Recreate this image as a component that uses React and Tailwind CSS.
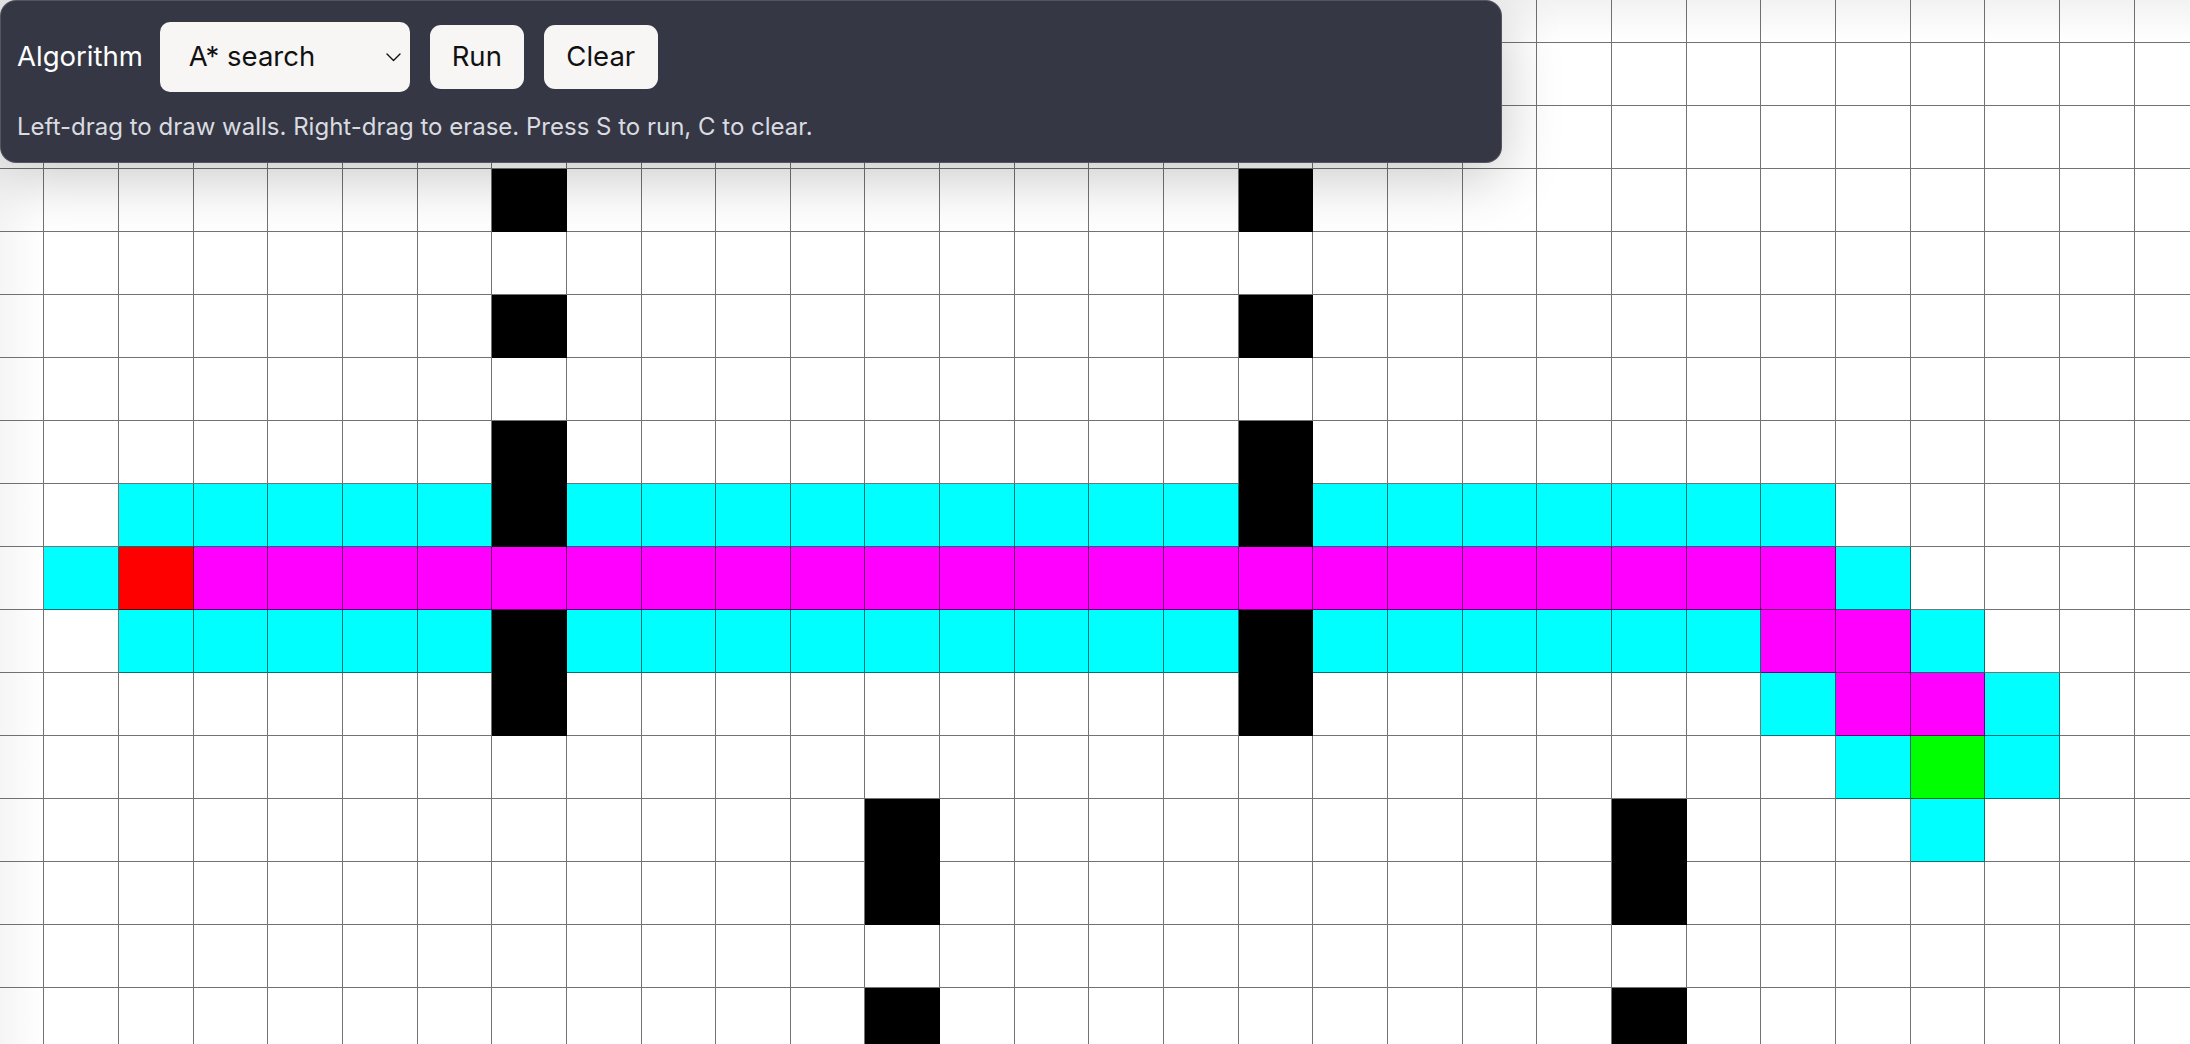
import React, { useState } from 'react';

const COLS = 30;
const ROWS = 17;

// cell kinds on the board
const WALL = 'wall';
const OPEN = 'open';
const PATH = 'path';
const START = 'start';
const GOAL = 'goal';

const cellClass = {
    empty: 'bg-white',
    [WALL]: 'bg-black',
    [OPEN]: 'bg-[#00ffff]',
    [PATH]: 'bg-[#ff00ff]',
    [START]: 'bg-[#ff0000]',
    [GOAL]: 'bg-[#00ff00]',
};

function buildBoard() {
    const board = Array.from({ length: ROWS }, () => Array(COLS).fill('empty'));
    const set = (r, c, kind) => { board[r][c] = kind; };
    const span = (r, from, to, kind) => { for (let c = from; c <= to; c++) set(r, c, kind); };

    // two upper walls with gaps
    [7, 17].forEach((c) => [3, 5, 7, 8, 10, 11].forEach((r) => set(r, c, WALL)));
    // two lower walls
    [12, 22].forEach((c) => [13, 14, 16].forEach((r) => set(r, c, WALL)));

    // explored cells
    span(8, 2, 6, OPEN); span(8, 8, 16, OPEN); span(8, 18, 24, OPEN);
    span(10, 2, 6, OPEN); span(10, 8, 16, OPEN); span(10, 18, 23, OPEN);
    set(9, 1, OPEN); set(9, 25, OPEN);
    set(10, 26, OPEN);
    set(11, 24, OPEN); set(11, 27, OPEN);
    set(12, 25, OPEN); set(12, 27, OPEN);
    set(13, 26, OPEN);

    // final route
    span(9, 3, 24, PATH);
    set(10, 24, PATH); set(10, 25, PATH);
    set(11, 25, PATH); set(11, 26, PATH);

    set(9, 2, START);
    set(12, 26, GOAL);
    return board;
}

const Chevron = () => (
    <svg width="15" height="9" viewBox="0 0 15 9" fill="none" className="pointer-events-none absolute right-[9px] top-[31px]">
        <path d="M1 1l6.5 6.5L14 1" stroke="#111" strokeWidth="1.4" strokeLinecap="round" strokeLinejoin="round" />
    </svg>
);

export default function App() {
    const [board] = useState(buildBoard);
    const [algo, setAlgo] = useState('astar');

    return (
        <div className="relative h-screen w-full overflow-hidden bg-white font-['Inter','Liberation_Sans',sans-serif]">
            {/* Board */}
            <div className="ml-[-30.4px] mt-[-20.3px] grid grid-cols-[repeat(30,74.67px)] grid-rows-[repeat(17,63px)]">
                {board.map((row, r) =>
                    row.map((kind, c) => (
                        <div key={`${r}-${c}`} className={`border-r border-b border-black/55 ${cellClass[kind]}`} />
                    ))
                )}
            </div>

            {/* soft edge shading */}
            <div className="pointer-events-none absolute inset-x-0 top-0 h-[42px] bg-gradient-to-b from-black/[0.05] to-transparent" />
            <div className="pointer-events-none absolute inset-y-0 left-0 w-[44px] bg-gradient-to-r from-black/[0.04] to-transparent" />

            {/* Toolbar */}
            <div className="absolute left-0 top-0 w-[1502px] rounded-[16px] border border-white/15 bg-[#353844] pl-[16px] pt-[21px] pb-[18px] shadow-[0_14px_60px_rgba(0,0,0,0.22)]">
                <div className="flex items-center">
                    <span className="text-[27.5px] text-white">Algorithm</span>
                    <div className="relative ml-[17px] h-[70px] w-[250px]">
                        <select
                            value={algo}
                            onChange={(e) => setAlgo(e.target.value)}
                            className="h-full w-full appearance-none rounded-[10px] bg-[#f7f6f5] pl-[29px] text-[27.5px] text-[#111] outline-none"
                        >
                            <option value="astar">A* search</option>
                            <option value="dijkstra">Dijkstra</option>
                            <option value="bfs">Breadth-first</option>
                        </select>
                        <Chevron />
                    </div>
                    <button className="ml-[20px] h-[64px] w-[94px] rounded-[11px] bg-[#f7f6f5] text-[27.5px] text-[#111]">Run</button>
                    <button className="ml-[20px] h-[64px] w-[114px] rounded-[11px] bg-[#f7f6f5] text-[27.5px] text-[#111]">Clear</button>
                </div>
                <p className="mt-[18px] text-[24px] leading-[34px] text-[#dadbe0]">
                    Left-drag to draw walls. Right-drag to erase. Press S to run, C to clear.
                </p>
            </div>
        </div>
    );
}
